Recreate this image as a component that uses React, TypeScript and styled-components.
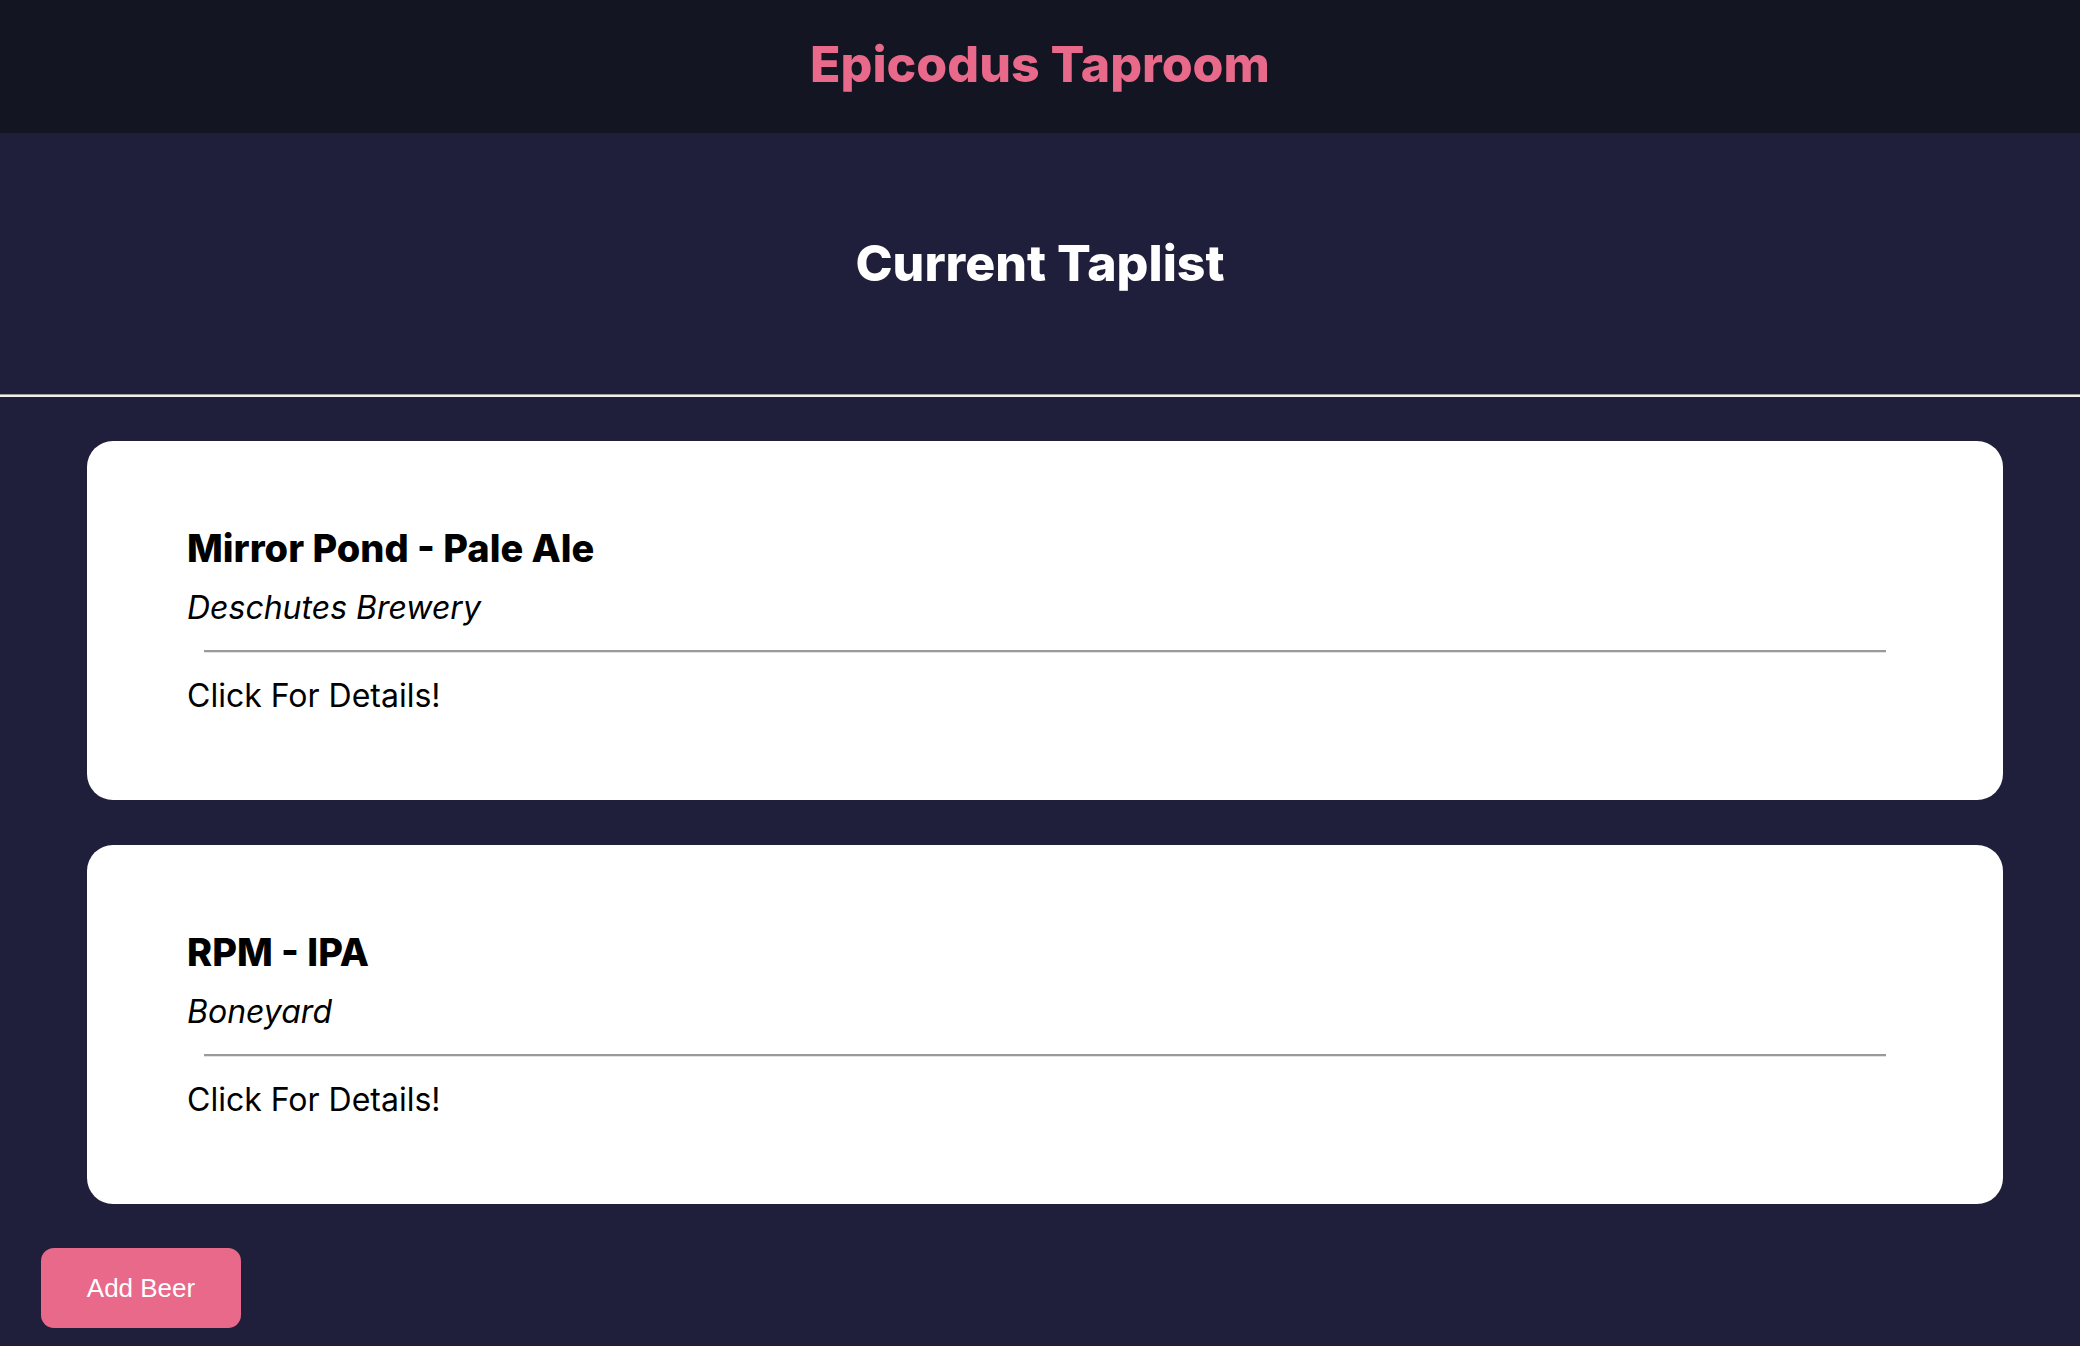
import React from "react";
import styled, { createGlobalStyle } from "styled-components";

const GlobalStyle = createGlobalStyle`
  html, body {
    margin: 0;
    padding: 0;
    background: #1f1f3b;
  }
  body {
    font-family: Inter, "Noto Sans", sans-serif;
    min-height: 100vh;
  }
  * { box-sizing: border-box; }
`;

const Page = styled.div`
  min-height: 100vh;
  background: #1f1f3b;
  display: flex;
  flex-direction: column;
  padding-bottom: 20px;
`;

const TopBar = styled.header`
  height: 133px;
  background: #141523;
  display: flex;
  align-items: center;
  justify-content: center;
  padding-bottom: 6px;
`;

const Brand = styled.h1`
  margin: 0;
  font-family: Inter, "Noto Sans", sans-serif;
  font-weight: 800;
  font-size: 50px;
  line-height: 60px;
  color: #e8698a;
  letter-spacing: 0;
`;

const Hero = styled.section`
  padding-top: 100px;
  padding-bottom: 101px;
  display: flex;
  justify-content: center;
`;

const HeroTitle = styled.h2`
  margin: 0;
  font-family: Inter, "Noto Sans", sans-serif;
  font-weight: 800;
  font-size: 50px;
  line-height: 60px;
  color: #ffffff;
  letter-spacing: 0;
`;

const Rule = styled.hr`
  margin: 0;
  height: 0;
  border: none;
  border-top: 1px solid #9a9a9a;
  border-bottom: 2px solid #eeeeee;
`;

const List = styled.div`
  display: flex;
  flex-direction: column;
  gap: 45px;
  margin: 44px 77px 0 87px;
`;

const Card = styled.div`
  background: #ffffff;
  border-radius: 26px;
  padding: 84px 100px 85px 100px;
  display: flex;
  flex-direction: column;
  cursor: pointer;
`;

const BeerName = styled.h3`
  margin: 0;
  font-family: Inter, "Noto Sans", sans-serif;
  font-weight: 800;
  font-size: 38px;
  line-height: 46px;
  color: #000000;
  letter-spacing: 0;
`;

const Brewery = styled.p`
  margin: 18px 0 0;
  font-family: Inter, "Noto Sans", sans-serif;
  font-style: italic;
  font-size: 32px;
  line-height: 38px;
  color: #000000;
`;

const CardRule = styled.hr`
  margin: 23px 17px 0;
  height: 0;
  border: none;
  border-top: 2px solid #9a9a9a;
  border-bottom: 1px solid #e3e3e3;
`;

const Details = styled.p`
  margin: 24px 0 0;
  font-family: Inter, "Noto Sans", sans-serif;
  font-size: 32px;
  line-height: 38px;
  color: #000000;
`;

const AddButton = styled.button`
  margin: 44px 0 0 41px;
  width: 200px;
  height: 80px;
  border: none;
  border-radius: 13px;
  background: #e8698a;
  color: #ffffff;
  font-family: "Liberation Sans", Arial, sans-serif;
  font-size: 26px;
  cursor: pointer;
  align-self: flex-start;
`;

const beers = [
  { name: "Mirror Pond", style: "Pale Ale", brewery: "Deschutes Brewery" },
  { name: "RPM", style: "IPA", brewery: "Boneyard" },
];

export default function App() {
  return (
    <>
      <GlobalStyle />
      <Page>
        <TopBar>
          <Brand>Epicodus Taproom</Brand>
        </TopBar>
        <Hero>
          <HeroTitle>Current Taplist</HeroTitle>
        </Hero>
        <Rule />
        <List>
          {beers.map((b) => (
            <Card key={b.name}>
              <BeerName>
                {b.name} - {b.style}
              </BeerName>
              <Brewery>{b.brewery}</Brewery>
              <CardRule />
              <Details>Click For Details!</Details>
            </Card>
          ))}
        </List>
        <AddButton>Add Beer</AddButton>
      </Page>
    </>
  );
}
